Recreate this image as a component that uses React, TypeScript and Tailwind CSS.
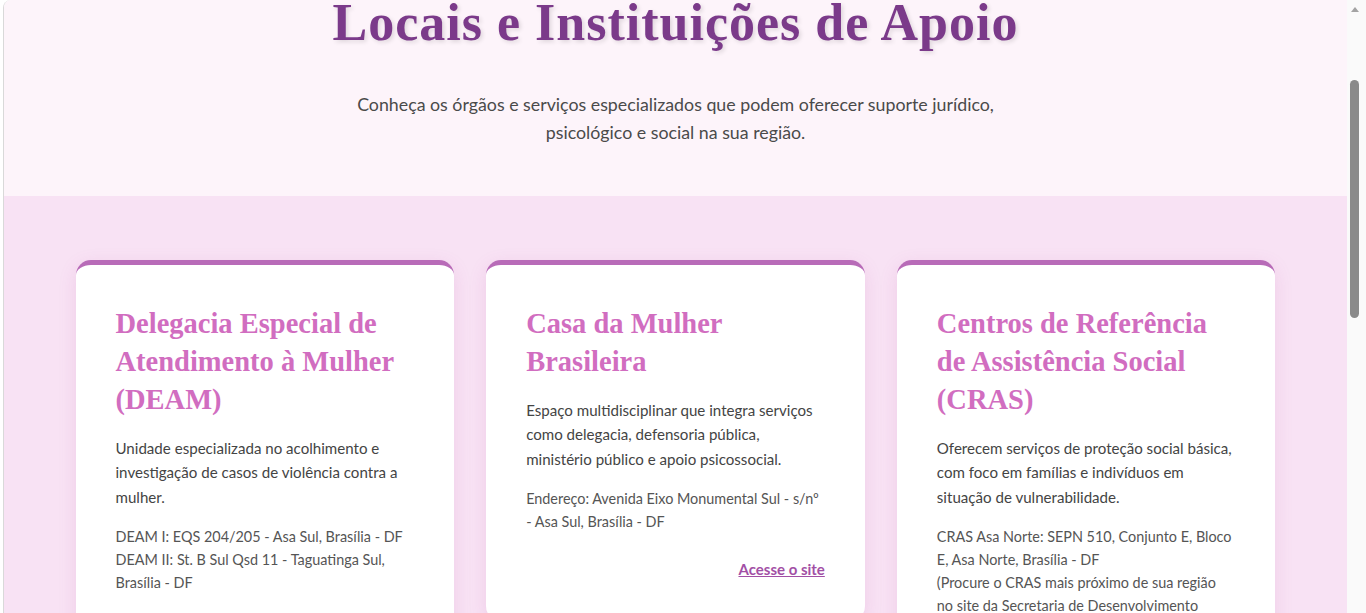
import React from 'react';

const serif = "font-['Liberation_Serif',Georgia,serif]";
const sans = "font-['Lato','Segoe_UI',sans-serif]";

type Place = {
  title: string;
  text: string;
  address: string[];
  link?: string;
};

const PLACES: Place[] = [
  {
    title: 'Delegacia Especial de Atendimento à Mulher (DEAM)',
    text: 'Unidade especializada no acolhimento e investigação de casos de violência contra a mulher.',
    address: ['DEAM I: EQS 204/205 - Asa Sul, Brasília - DF', 'DEAM II: St. B Sul Qsd 11 - Taguatinga Sul, Brasília - DF'],
  },
  {
    title: 'Casa da Mulher Brasileira',
    text: 'Espaço multidisciplinar que integra serviços como delegacia, defensoria pública, ministério público e apoio psicossocial.',
    address: ['Endereço: Avenida Eixo Monumental Sul - s/nº', '- Asa Sul, Brasília - DF'],
    link: 'Acesse o site',
  },
  {
    title: 'Centros de Referência de Assistência Social (CRAS)',
    text: 'Oferecem serviços de proteção social básica, com foco em famílias e indivíduos em situação de vulnerabilidade.',
    address: [
      'CRAS Asa Norte: SEPN 510, Conjunto E, Bloco E, Asa Norte, Brasília - DF',
      '(Procure o CRAS mais próximo de sua região no site da Secretaria de Desenvolvimento Social do DF)',
    ],
  },
];

function PlaceCard({ place }: { place: Place }) {
  return (
    <div className="rounded-[15px] border-t-[5px] border-[#b86bb8] bg-white p-10 shadow-[0_5px_18px_rgba(190,90,170,0.15)]">
      <h3 className={`${serif} mb-[17px] text-[28.5px] font-bold leading-[38px] text-[#d16dc0]`}>{place.title}</h3>
      <p className={`${sans} mb-4 text-[15.1px] leading-[24.3px] text-[#444]`}>{place.text}</p>
      <p className={`${sans} text-[14.4px] leading-[23px] text-[#555]`}>
        {place.address.map((line, i) => (
          <span key={i} className="block">
            {line}
          </span>
        ))}
      </p>
      {place.link && (
        <div className="mt-6 text-right">
          <a href="#" className={`${sans} text-[15px] font-bold text-[#a24fa5] underline`}>
            {place.link}
          </a>
        </div>
      )}
    </div>
  );
}

export default function App() {
  return (
    <div className="flex h-[613px] overflow-hidden bg-white">
      <main className="ml-[3px] flex-1 overflow-hidden rounded-tl-[8px] border-l border-[#d9d9d9]">
        <header className="flow-root h-[196px] bg-[#fdf4fa] text-center">
          <h2
            className={`${serif} -mt-[8px] text-[52px] font-bold leading-[1.2] tracking-[1px] text-[#7b3a8a] [text-shadow:2px_2px_4px_rgba(0,0,0,0.12)]`}
          >
            Locais e Instituições de Apoio
          </h2>
          <p className={`${sans} mx-auto mt-[36px] max-w-[680px] text-[17.8px] leading-[28px] text-[#4a4a4a]`}>
            Conheça os órgãos e serviços especializados que podem oferecer suporte jurídico,
            <br />
            psicológico e social na sua região.
          </p>
        </header>
        <section className="h-full bg-[#f8e2f4] pt-16">
          <div className="mx-auto grid max-w-[1200px] grid-cols-3 items-start gap-8">
            {PLACES.map((p) => (
              <PlaceCard key={p.title} place={p} />
            ))}
          </div>
        </section>
      </main>
      <div className="flex w-[19px] flex-col items-center bg-[#fafafa] pr-[4px]">
        <div className="mt-[7px] h-0 w-0 border-x-[4px] border-b-[5px] border-x-transparent border-b-[#a3a3a3]" />
        <div className="mt-[68px] h-[238px] w-[9px] rounded-full bg-[#8a8a8a]" />
      </div>
    </div>
  );
}
